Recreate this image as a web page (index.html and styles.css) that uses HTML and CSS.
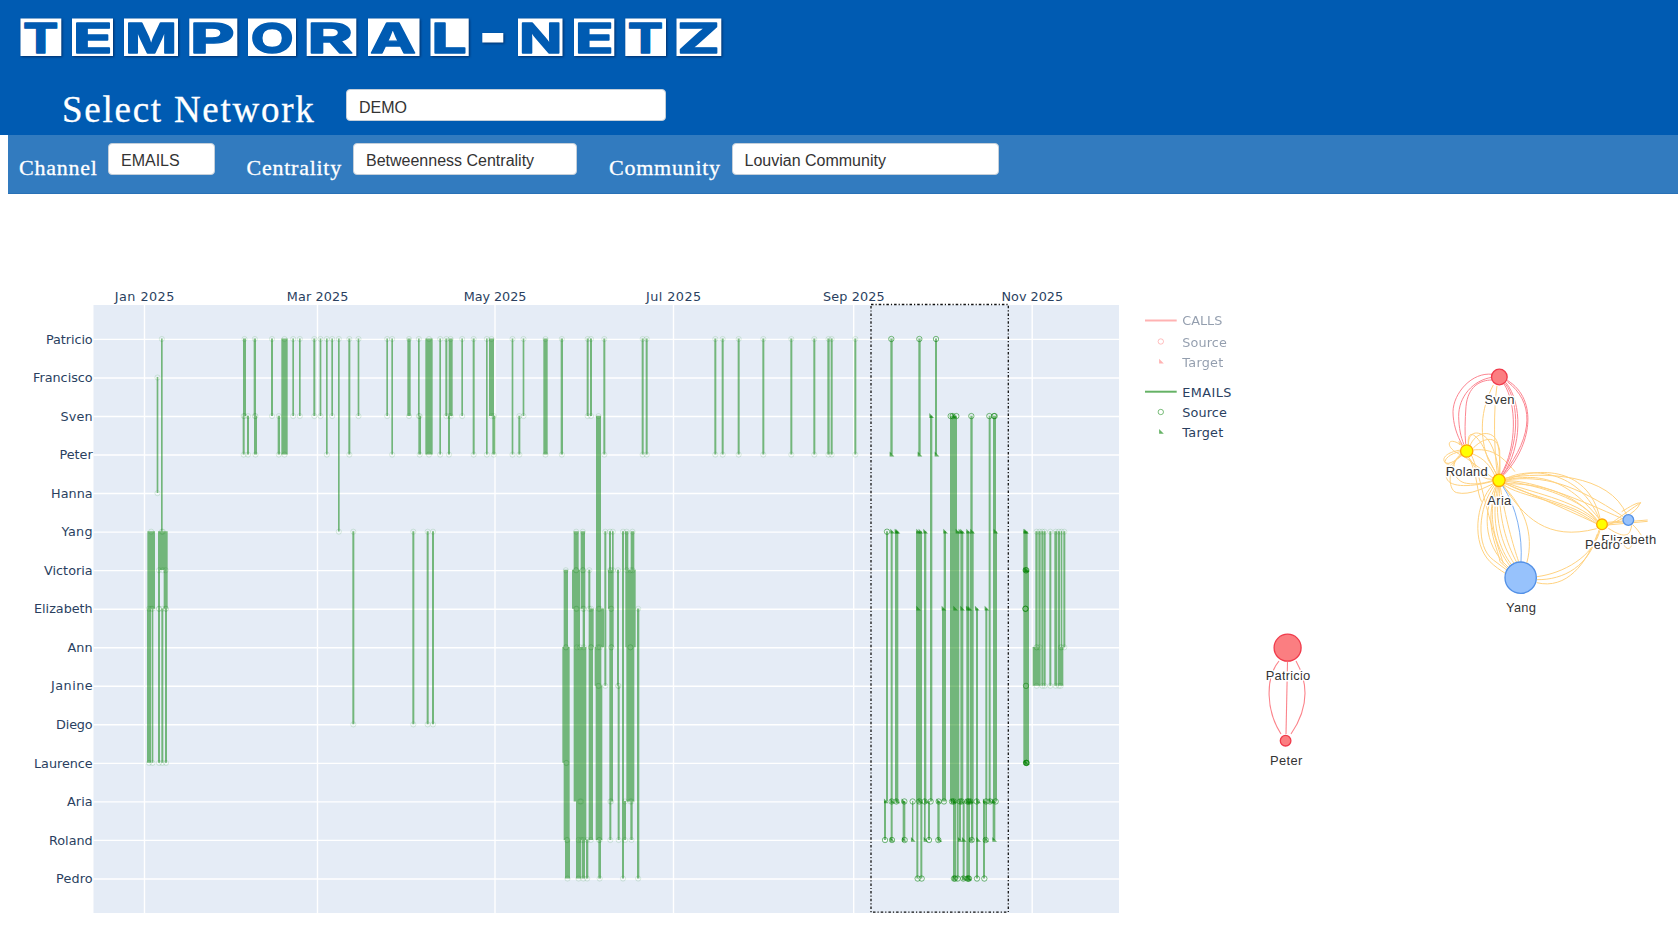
FILE: index.html
```html
<!DOCTYPE html>
<html lang="en">
<head>
<meta charset="utf-8">
<title>Temporal-Netz</title>
<link rel="stylesheet" href="styles.css">
</head>
<body>
<header class="top">
  <svg class="logo" id="logo" viewBox="0 0 740 62" width="740" height="62" role="img" aria-label="TEMPORAL-NETZ"></svg>
  <div class="network-row">
    <span class="network-label">Select Network</span>
    <div class="select select-network">DEMO</div>
  </div>
</header>
<nav class="filters">
  <div class="filter filter-channel"><span class="filter-label">Channel</span><div class="select">EMAILS</div></div>
  <div class="filter filter-centrality"><span class="filter-label">Centrality</span><div class="select">Betweenness Centrality</div></div>
  <div class="filter filter-community"><span class="filter-label">Community</span><div class="select">Louvian Community</div></div>
</nav>
<main class="views">
  <svg class="timeline" id="timeline" viewBox="0 194 1240 735" width="1240" height="735"></svg>
  <svg class="graph" viewBox="1240 194 438 735" width="438" height="735">
    <g transform="translate(1400 350) scale(.33333)">
      <g class="edge edge-orange">
        <path d="M280 105C240 180 238 260 265 330L290 372"/>
        <path d="M291 107C280 180 282 300 292 371"/>
        <path d="M205 284C205 240 240 240 265 270C285 300 294 340 296 372"/>
        <path d="M210 288C225 245 280 235 293 280C300 310 300 345 298 372"/>
        <path d="M214 300C250 260 290 255 299 300L300 372"/>
        <path d="M218 300C270 295 300 310 345 365"/>
        <path d="M219 312C250 325 270 345 285 378"/>
        <path d="M205 284C200 220 245 270 258 310L290 375"/>
        <path d="M190 290C145 255 135 285 165 305L200 325L280 385"/>
        <path d="M182 300C120 310 125 340 145 340C170 335 180 315 190 308"/>
        <path d="M182 305C140 310 120 345 148 342"/>
        <path d="M188 315C160 335 130 360 140 385C150 415 220 410 278 394"/>
        <path d="M185 310C145 340 160 395 200 400C230 405 260 398 278 391"/>
        <path d="M180 320C145 340 140 420 170 428C210 438 260 410 282 400"/>
        <path d="M188 290C170 265 180 275 178 285"/>
        <path d="M205 322C225 340 230 390 278 388"/>
        <path d="M214 315C240 370 250 460 310 640"/>
        <path d="M207 323C235 380 230 430 245 455"/>
        <path d="M280 403C225 460 215 580 270 635C285 650 300 660 316 670"/>
        <path d="M284 405C235 470 225 590 280 630L320 660"/>
        <path d="M288 407C250 480 245 580 325 652"/>
        <path d="M290 408C260 500 285 590 330 648"/>
        <path d="M293 410C270 520 300 600 335 645"/>
        <path d="M296 411C280 520 315 600 342 640"/>
        <path d="M299 411C295 520 330 600 350 637"/>
        <path d="M290 408C250 530 290 580 300 635L322 655"/>
        <path d="M301 411C315 500 340 590 356 635"/>
        <path d="M310 408C370 470 405 550 380 640"/>
        <path d="M317 390C400 355 560 340 600 504"/>
        <path d="M317 386C390 350 540 360 598 508"/>
        <path d="M317 384C430 365 630 370 680 495"/>
        <path d="M317 390C430 375 520 400 670 500"/>
        <path d="M317 392C400 390 540 450 667 506"/>
        <path d="M317 394C420 405 550 450 592 511"/>
        <path d="M317 397C380 425 530 450 590 514"/>
        <path d="M316 399C380 440 530 460 588 517"/>
        <path d="M315 401C390 430 480 470 588 520"/>
        <path d="M314 401C400 400 520 420 590 512"/>
        <path d="M312 405C360 440 490 450 587 520"/>
        <path d="M310 406C370 500 440 575 590 536"/>
        <path d="M317 388C390 380 480 360 597 506"/>
        <path d="M600 541C580 620 490 670 411 680"/>
        <path d="M597 540C570 650 490 690 411 689"/>
        <path d="M592 552C560 640 500 720 410 698"/>
        <path d="M623 520L743 510"/><path d="M623 525L743 514"/><path d="M623 517L670 513"/>
        <path d="M620 530C660 500 740 445 720 460C710 490 650 515 623 525"/>
        <path d="M665 485C690 470 710 457 721 459"/>
        <path d="M625 535C680 570 690 555 695 526"/><path d="M698 524C720 545 724 560 725 555"/>
        <path d="M672 585C680 600 691 598 695 585"/>
      </g>
      <g class="edge edge-red">
        <path d="M278 73C215 65 160 130 159 185C159 220 170 255 187 285"/>
        <path d="M276 82C220 90 175 140 176 200C177 235 182 260 192 284"/>
        <path d="M276 90C240 90 203 110 198 170C195 210 194 250 197 282"/>
        <path d="M312 102C350 160 352 290 303 374"/>
        <path d="M315 100C362 160 356 290 305 374"/>
        <path d="M318 98C368 160 366 290 309 374"/>
        <path d="M322 95C400 155 405 250 309 374"/>
        <path d="M322 91C418 150 392 290 312 374"/>
      </g>
      <path class="edge edge-blue" d="M308 408C350 470 368 560 363 636"/>
      <g class="node-red"><circle cx="298" cy="81" r="23.5"/></g>
      <g class="node-yellow"><circle cx="200" cy="303" r="18.5"/><circle cx="297" cy="391" r="18.5"/><circle cx="606" cy="523" r="16"/></g>
      <g class="node-blue"><circle cx="685" cy="510" r="16"/><circle cx="362" cy="683" r="47"/></g>
    </g>
    <g class="edge edge-rose">
      <path d="M1279 661C1265 678 1266 711 1281 734"/>
      <path d="M1287.500 662L1286 734"/>
      <path d="M1296 661C1309 684 1308 709 1291 734"/>
    </g>
    <g class="node-red node-full"><circle cx="1287.600" cy="647.700" r="13.500"/><circle cx="1285.600" cy="740.700" r="5.300"/></g>
    <g class="node-names">
      <text x="1499.500" y="403.500" textLength="30">Sven</text>
      <text x="1466.700" y="475.700" textLength="42">Roland</text>
      <text x="1499.300" y="505" textLength="24">Aria</text>
      <text x="1628.800" y="544" textLength="55">Elizabeth</text>
      <text x="1602.500" y="549" textLength="35">Pedro</text>
      <text x="1521" y="611.500" textLength="30">Yang</text>
      <text x="1288" y="679.500" textLength="44.500">Patricio</text>
      <text x="1286.200" y="765" textLength="32.500">Peter</text>
    </g>
  </svg>
</main>
<script src="main.js"></script>
</body>
</html>
```
FILE: styles.css
```css
* { box-sizing: border-box; }
body {
  margin: 0;
  height: 929px;
  overflow: hidden;
  background: #fff;
  font-family: "Liberation Sans", Arial, sans-serif;
}
.top { height: 134.500px; background: #005bb2; }
.logo { display: block; }
.tile { fill: #fff; filter: drop-shadow(1px 1px 1px rgba(0, 20, 60, .6)); }
.glyph { fill: #005bb2; font: bold 43px Inter, sans-serif; stroke: #005bb2; stroke-width: 1.4; stroke-linejoin: round; }
.network-row { display: flex; padding: 27px 0 0 62px; }
.network-label {
  width: 284px;
  padding-top: 0;
  color: #fff;
  font: 37px/42px "Liberation Serif", "Times New Roman", serif;
  letter-spacing: 1.750px;
  white-space: nowrap;
  -webkit-text-stroke: .3px #fff;
}
.select {
  height: 32px;
  padding-left: 12px;
  border: 1px solid #c4cfda;
  border-radius: 4px;
  background: #fff;
  color: #333;
  font-size: 16px;
  line-height: 34px;
  white-space: nowrap;
}
.select-network { width: 320px; line-height: 35px; }
.filters {
  display: flex;
  height: 59px;
  margin-left: 8px;
  padding: 8px 0 0 11px;
  background: #327bbf;
  border-bottom: 1px solid #2871b6;
}
.filter { display: flex; }
.filter-label {
  padding-top: 12px;
  color: #fff;
  font: 22px/26px "Liberation Serif", "Times New Roman", serif;
  letter-spacing: .75px;
  -webkit-text-stroke: .3px #fff;
}
.filter-channel { width: 227.500px; }
.filter-channel .filter-label { width: 89px; }
.filter-channel .select { width: 107px; }
.filter-centrality { width: 362.500px; }
.filter-centrality .filter-label { width: 106.500px; }
.filter-centrality .select { width: 224px; }
.filter-community .filter-label { width: 122.500px; }
.filter-community .select { width: 267px; }
.views { display: flex; height: 735.500px; }
.timeline, .graph { display: block; flex: none; }

.plot { fill: #e5ecf6; }
.grid { stroke: #fff; stroke-width: 1.400; }
.axis-text, .legend-text { fill: #2a3f5f; font: 12.800px "DejaVu Sans", Verdana, sans-serif; }
.axis-y { text-anchor: end; }
.axis-x { text-anchor: middle; }
.bars { fill: #008000; opacity: .5; }
.ring { fill: none; stroke: #008000; stroke-width: 1; opacity: .5; }
.dart { fill: #008000; opacity: .6; }
.faint .ring, .faint .dart { opacity: .12; }
.brush { fill: none; stroke: #111; stroke-width: 1.300; stroke-dasharray: 2.500 2 1.200 2; }
.legend-line { stroke: #008000; stroke-width: 2; opacity: .6; }
.legend-off { opacity: .5; }
.legend-off .ring, .legend-off .legend-line { stroke: #f00; }
.legend-off .dart { fill: #f00; }

.edge { fill: none; stroke-width: 3; }
.edge-orange { stroke: #ffa500; opacity: .5; }
.edge-red { stroke: #fa5060; opacity: .7; }
.edge-blue { stroke: #5a9bf0; opacity: .8; }
.edge-rose { stroke: #fa5a64; stroke-width: 1.100; opacity: .75; }
.node-red { fill: #fb7e81; stroke: #f03a4a; stroke-width: 4; }
.node-full { stroke-width: 1.300; }
.node-yellow { fill: #ff0; stroke: #ffa500; stroke-width: 4; }
.node-blue { fill: #97c2fc; stroke: #5290e6; stroke-width: 4; }
.node-names {
  fill: #343434;
  font-size: 13px;
  text-anchor: middle;
  stroke: #fff;
  stroke-width: 3px;
  stroke-linejoin: round;
  paint-order: stroke;
}
```
FILE: main.js
```js
const NS = 'http://www.w3.org/2000/svg';
function add(parent, tag, attrs, text) {
  const el = document.createElementNS(NS, tag);
  for (const k in attrs) el.setAttribute(k, attrs[k]);
  if (text) el.textContent = text;
  parent.appendChild(el);
  return el;
}

// Title: one white tile per letter, the dash is a plain bar
const logo = document.getElementById('logo');
const pen = document.createElement('canvas').getContext('2d');
pen.font = 'bold 43px Inter, sans-serif';
const tiles = [['T', 20.5, 61.3], ['E', 72, 113], ['M', 124, 178], ['P', 189.3, 237.3], ['O', 248, 296],
  ['R', 306.7, 356.3], ['A', 368, 419.5], ['L', 430.5, 468.7], ['-', 482.3, 503.3], ['N', 518, 562.5],
  ['E', 574, 614.3], ['T', 625.3, 666], ['Z', 676.5, 721.3]];
tiles.forEach(([ch, a, b]) => {
  const dash = ch === '-';
  add(logo, 'rect', { class: 'tile', x: a, y: dash ? 33 : 18.5, width: b - a, height: dash ? 9.5 : 37.5 });
  if (!dash) {
    // scaled from the glyph's own ink box so every letter fills its tile
    const m = pen.measureText(ch);
    const left = -m.actualBoundingBoxLeft, right = m.actualBoundingBoxRight;
    const s = (b - a - 7.5) / (right - left);
    add(logo, 'text', { class: 'glyph', x: 0, y: 0,
      transform: `translate(${a + 3.75 - left * s} 52.6) scale(${s} .97)` }, ch);
  }
});

const svg = document.getElementById('timeline');
const rowY = i => 339.4 + i * 38.54;
add(svg, 'rect', { class: 'plot', x: 93.5, y: 305, width: 1025.5, height: 608 });

[['Jan 2025', 144.5], ['Mar 2025', 317.5], ['May 2025', 495], ['Jul 2025', 673.5], ['Sep 2025', 853.7], ['Nov 2025', 1032.2]]
  .forEach(([t, x], i) => {
    add(svg, 'line', { class: 'grid', x1: x, x2: x, y1: 305, y2: 913 });
    add(svg, 'text', { class: 'axis-text axis-x', x: x + .1, y: 301, textLength: [59.5, 61.5, 62.5, 55, 61.5, 61.5][i] }, t);
  });
[['Patricio', 46], ['Francisco', 33], ['Sven', 60.5], ['Peter', 59.5], ['Hanna', 51], ['Yang', 61.5], ['Victoria', 44],
  ['Elizabeth', 34], ['Ann', 67.5], ['Janine', 51], ['Diego', 56], ['Laurence', 34], ['Aria', 67], ['Roland', 49], ['Pedro', 56]]
  .forEach(([t, x], i) => {
    add(svg, 'line', { class: 'grid', x1: 93.5, x2: 1119, y1: rowY(i), y2: rowY(i) });
    add(svg, 'text', { class: 'axis-text axis-y', x: 92.7, y: rowY(i) + 4.2, textLength: (92.7 - x).toFixed(1) }, t);
  });

// Each group: x origin and [left, right, first row, last row], in thirds of a pixel
const groups = [
  [0, [[470, 475, 1, 4], [483, 488, 0, 5], [442, 465, 5, 7], [474, 503, 5, 6], [474, 480, 6, 7], [491, 503, 6, 7],
    [441, 453, 7, 11], [455, 460, 7, 11], [474, 480, 7, 11], [484, 490, 7, 11], [495, 501, 7, 11]]],
  [220, [[69, 78, 0, 2], [68, 74, 2, 3], [81, 87, 2, 3], [101, 108, 0, 2], [102, 111, 2, 3], [153, 159, 0, 2], [173, 180, 2, 3],
    [184, 203, 0, 3], [217, 222, 0, 2], [237, 242, 0, 2], [280, 286, 0, 2], [299, 304, 0, 2], [318, 323, 0, 3], [334, 339, 0, 2],
    [354, 359, 0, 5], [385, 391, 0, 3], [413, 418, 0, 2], [499, 504, 0, 2], [514, 519, 0, 3], [562, 572, 0, 2], [594, 599, 0, 2],
    [595, 603, 2, 3], [616, 638, 0, 3], [658, 663, 0, 3], [676, 682, 0, 2], [686, 698, 0, 2], [684, 690, 2, 3], [724, 729, 0, 2],
    [758, 764, 0, 3], [798, 803, 0, 3], [807, 822, 0, 2], [817, 826, 2, 3], [875, 880, 0, 3], [895, 901, 2, 3], [908, 913, 0, 2],
    [970, 983, 0, 3], [397, 403, 5, 10], [577, 583, 5, 10], [620, 626, 5, 10], [636, 642, 5, 10]]],
  [530, [[92, 99, 0, 3], [170, 176, 0, 2], [180, 186, 0, 2], [220, 226, 0, 3], [335, 341, 0, 3], [347, 353, 0, 3],
    [553, 559, 0, 3], [575, 581, 0, 3], [623, 629, 0, 3], [697, 703, 0, 3], [781, 787, 0, 3], [850, 856, 0, 3], [892, 899, 0, 3],
    [902, 908, 0, 3], [973, 979, 0, 3]]],
  [540, [[168, 183, 2, 7], [101, 116, 5, 6], [122, 135, 5, 6], [193, 199, 5, 9], [207, 213, 5, 6], [216, 221, 5, 6],
    [246, 252, 5, 14], [255, 265, 5, 6], [272, 283, 5, 6], [71, 84, 6, 8], [96, 120, 6, 7], [122, 136, 6, 7], [145, 151, 6, 7],
    [204, 221, 6, 7], [231, 237, 6, 9], [256, 287, 6, 8], [101, 120, 7, 8], [128, 135, 7, 8], [146, 161, 7, 8], [167, 192, 7, 8],
    [208, 221, 7, 8], [291, 298, 7, 14], [67, 89, 8, 11], [101, 139, 8, 12], [146, 159, 8, 13], [164, 184, 8, 9],
    [208, 219, 8, 12], [259, 283, 8, 12], [167, 187, 9, 13], [233, 239, 9, 13], [71, 89, 11, 13], [108, 139, 12, 13],
    [208, 214, 12, 13], [252, 258, 12, 13], [271, 278, 12, 13], [75, 90, 13, 14], [108, 123, 13, 14], [125, 135, 13, 14],
    [138, 145, 13, 14], [175, 183, 13, 14]]],
  [860, [[91, 98, 0, 3], [175, 182, 0, 3], [225, 231, 0, 3], [210, 217, 2, 12], [270, 291, 2, 12], [331, 338, 2, 12],
    [386, 392, 2, 12], [399, 408, 2, 12], [78, 84, 5, 12], [92, 98, 5, 12], [105, 115, 5, 12], [168, 186, 5, 12],
    [192, 199, 5, 12], [251, 258, 5, 7], [246, 258, 7, 12], [291, 298, 5, 12], [301, 310, 5, 12], [319, 327, 5, 12],
    [329, 341, 5, 12], [348, 354, 7, 12], [376, 382, 7, 12], [405, 411, 5, 12],
    [72, 78, 12, 13], [92, 98, 12, 13], [128, 136, 12, 13], [156, 160, 12, 13], [169, 175, 12, 14], [181, 187, 12, 14],
    [192, 197, 12, 13], [204, 210, 12, 13], [232, 239, 12, 13], [279, 288, 12, 14], [290, 296, 12, 14], [297, 303, 12, 13],
    [308, 314, 12, 14], [319, 330, 12, 14], [333, 340, 12, 13], [348, 354, 12, 14], [369, 375, 12, 14], [376, 381, 12, 13],
    [398, 406, 12, 13], [490, 503, 5, 6], [490, 507, 6, 11], [526, 533, 5, 8], [535, 542, 5, 8], [518, 542, 8, 9],
    [544, 550, 5, 9], [551, 557, 5, 9], [568, 574, 5, 9], [583, 591, 5, 9], [593, 600, 5, 9], [594, 610, 8, 9],
    [602, 607, 5, 8], [610, 616, 5, 8]]]
];
let d = '';
const faint = add(svg, 'g', { class: 'faint' });
groups.forEach(([ox, segs]) => segs.forEach(([a, b, r0, r1]) => {
  const x0 = (ox + a / 3).toFixed(2), x1 = (ox + b / 3).toFixed(2);
  const y0 = (rowY(r0) - .8).toFixed(1), y1 = (rowY(r1) - .5).toFixed(1);
  d += `M${x0} ${y0}V${y1}H${x1}V${y0}Z`;
  const xm = (+x0 + +x1) / 2;
  if (xm < 871 || xm > 1030) [r0, r1].forEach(r => add(faint, 'circle', { class: 'ring', cx: xm, cy: rowY(r) - .4, r: 2.6 }));
}));
add(svg, 'path', { class: 'bars', d });

const ring = (p, x, y) => add(p, 'circle', { class: 'ring', cx: x, cy: y, r: 2.7 });
const dart = (p, x, y) => add(p, 'path', { class: 'dart', d: `M${x - 1.7} ${y - 3}V${y + 1.8}H${x + 3}Z` });
const sources = { 0: [94, 178, 228], 2: [272, 278, 289, 334, 388, 402, 404], 5: [81], 6: [497, 499], 7: [496, 497],
  9: [498], 11: [498, 499, 500],
  12: [95, 109, 133, 158, 178, 194, 212, 236, 252, 276, 281, 300, 305, 322, 326, 331, 350, 378, 390, 407],
  13: [75, 96, 134, 207, 235, 335, 377], 14: [173, 185, 282, 285, 293, 310, 322, 325, 327, 351, 373] };
const targets = { 2: [213, 282], 3: [94, 178, 229], 5: [96, 109, 112, 174, 181, 195, 255, 292, 301, 306, 324, 336, 406, 495, 498],
  6: [496, 500], 7: [174, 250, 285, 306, 323, 328, 350, 379], 11: [497, 500],
  12: [77, 96, 112, 130, 180, 198, 235, 278, 284, 303, 322, 328, 334, 354, 374, 392, 401],
  13: [95, 131, 158, 196, 238, 299, 311, 333, 354, 378, 402], 14: [283, 311, 324, 327] };
for (const r in sources) sources[r].forEach(x => ring(svg, 860 + x / 3, rowY(+r) - .4));
for (const r in targets) targets[r].forEach(x => dart(svg, 860 + x / 3, rowY(+r) - .4));

add(svg, 'rect', { class: 'brush', x: 871, y: 304.5, width: 137.3, height: 607.7 });

// Legend
[['CALLS', 320.5, 'legend-off', [[325, 40], [346.5, 44.5], [366.7, 41]]],
  ['EMAILS', 391.7, 'legend-on', [[397, 49], [417, 44.5], [437, 41]]]].forEach(([name, y, cls, t]) => {
  const g = add(svg, 'g', { class: cls });
  add(g, 'line', { class: 'legend-line', x1: 1145, x2: 1176.7, y1: y, y2: y });
  ring(g, 1160.8, t[1][0] - 5);
  dart(g, 1160.8, t[2][0] - 5);
  [name, 'Source', 'Target'].forEach((s, i) =>
    add(g, 'text', { class: 'legend-text', x: 1182.3, y: t[i][0], textLength: t[i][1] }, s));
});
```
